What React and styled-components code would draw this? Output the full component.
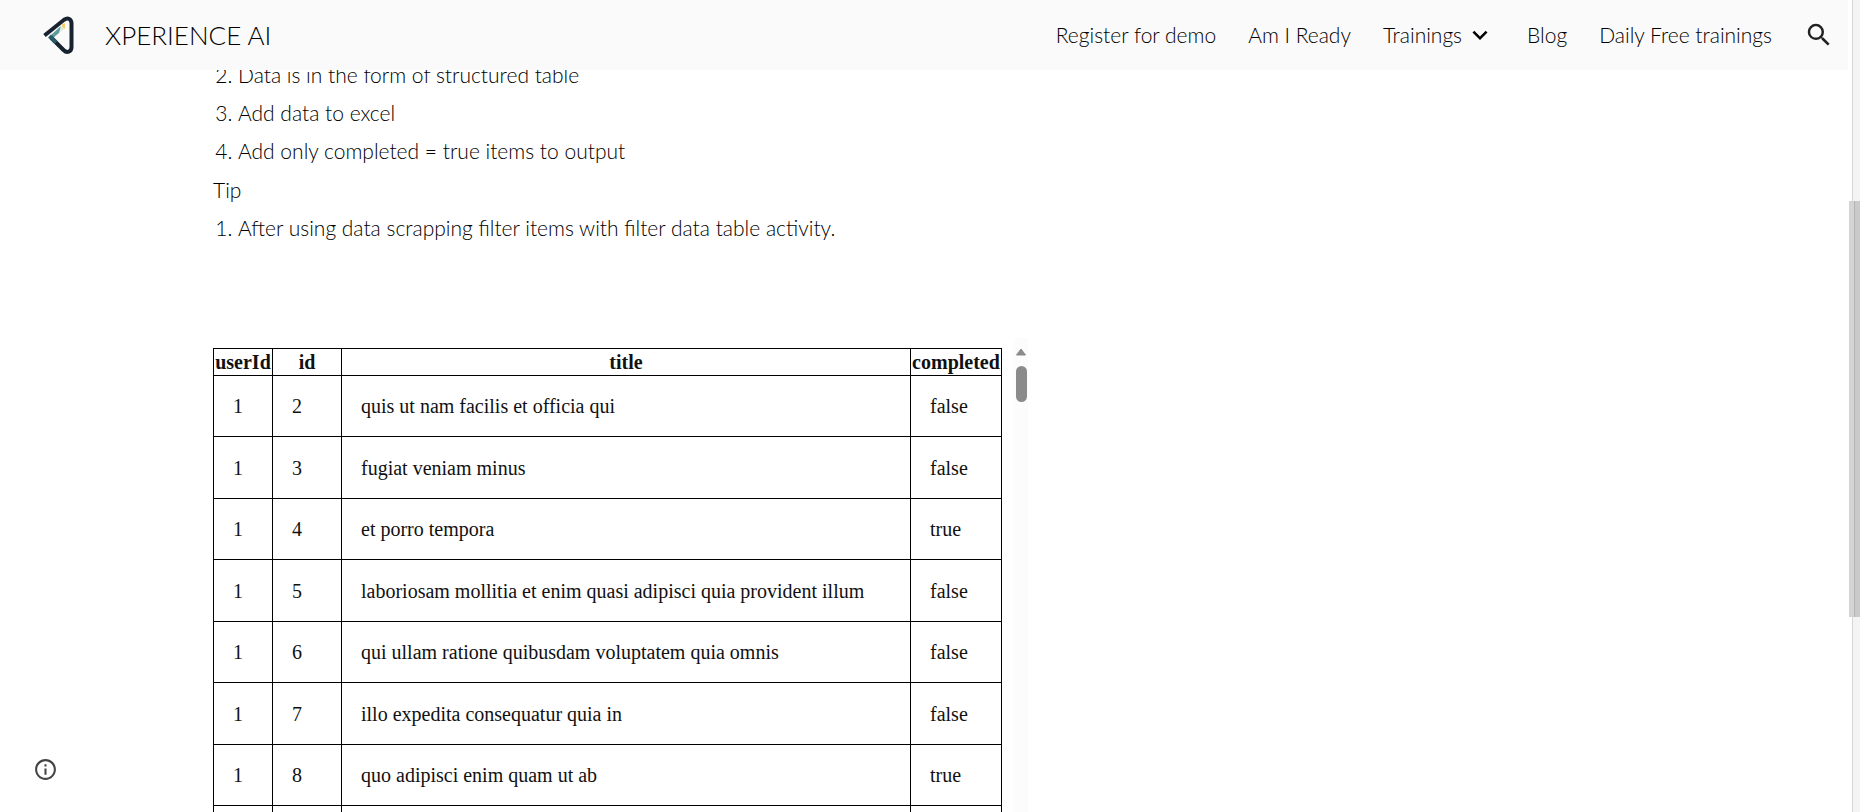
import React from "react";
import styled, { createGlobalStyle } from "styled-components";

const GlobalStyle = createGlobalStyle`
  *, *::before, *::after { box-sizing: border-box; }
  html, body { margin: 0; height: 100%; }
  body {
    background: #fff;
    color: #000;
    font-family: Lato, "Open Sans", sans-serif;
    font-size: 21px;
    font-weight: 300;
    overflow: hidden;
  }
`;

const Page = styled.div`
  display: flex;
  height: 100vh;
  overflow: hidden;
`;

const Viewport = styled.div`
  flex: 1;
  min-width: 0;
  overflow: hidden;
`;

const Header = styled.header`
  position: sticky;
  top: 0;
  z-index: 2;
  display: flex;
  align-items: center;
  justify-content: space-between;
  height: 70px;
  padding: 0 14px 0 40px;
  background: #fafafa;
`;

const Brand = styled.a`
  display: flex;
  align-items: center;
  gap: 28px;
  color: inherit;
  text-decoration: none;
  font-size: 26px;
  line-height: 32px;
  white-space: nowrap;
`;

const Nav = styled.nav`
  display: flex;
  align-items: center;
  gap: 32px;
  white-space: nowrap;
`;

const NavLink = styled.a`
  color: inherit;
  text-decoration: none;
  line-height: 28px;
`;

const MenuButton = styled.button`
  display: flex;
  align-items: center;
  gap: 3px;
  padding: 0;
  border: 0;
  background: none;
  color: inherit;
  font: inherit;
  line-height: 28px;
`;

const IconButton = styled.button`
  display: flex;
  padding: 0;
  border: 0;
  background: none;
  color: ${(p) => p.$color || "#212121"};
`;

const Content = styled.main`
  margin-top: -11px;
  padding-left: 213px;
`;

const Steps = styled.ol`
  margin: 0;
  padding-left: 25px;
  line-height: 32px;
`;

const Step = styled.li`
  margin-bottom: 6px;
`;

const Note = styled.p`
  margin: 0;
  padding: 1px 0 6px;
  line-height: 32px;
`;

const Embed = styled.section`
  display: flex;
  align-items: flex-start;
  gap: 12px;
  margin-top: 94px;
`;

const Table = styled.table`
  margin-top: 10px;
  border-collapse: collapse;
  color: #111;
  font-family: "Liberation Serif", serif;
  font-size: 20px;
  font-weight: 400;
  line-height: 24px;
`;

const HeadCell = styled.th`
  width: ${(p) => p.$width}px;
  height: 27px;
  padding: 1px;
  border: 1px solid #000;
`;

const Row = styled.tr`
  height: 61px;
  &:nth-child(even) { height: 62px; }
`;

const Cell = styled.td`
  padding: 0 0 0 19px;
  border: 1px solid #000;
`;

const EmbedScroll = styled.div`
  display: flex;
  flex-direction: column;
  align-items: center;
  align-self: stretch;
  gap: 10px;
  width: 14px;
  padding-top: 10px;
  background: #fcfcfc;
`;

const EmbedThumb = styled.div`
  width: 11px;
  height: 36px;
  border-radius: 6px;
  background: #8b8b8b;
`;

const PageScroll = styled.div`
  display: flex;
  flex-direction: column;
  align-items: flex-end;
  width: 12px;
  padding-top: 201px;
  background: linear-gradient(to right, #fff 4px, #d6d6d6 4px, #d6d6d6 5px, #f4f4f4 5px);
`;

const PageThumb = styled.div`
  width: 11px;
  height: 416px;
  background: linear-gradient(to right, #d4d4d4 5px, #b2b2b2 5px, #b2b2b2 6px, #cacaca 6px);
`;

const InfoCorner = styled.div`
  position: fixed;
  left: 33px;
  bottom: 30px;
`;

const Icon = ({ size, path }) => (
  <svg width={size} height={size} viewBox="0 0 24 24" fill="currentColor" aria-hidden="true">
    <path d={path} />
  </svg>
);

const Logo = () => (
  <svg width="37" height="40" viewBox="0 0 37 40" fill="none" aria-hidden="true">
    <path d="M11 20 L21 11 L19 18 L13 23Z" fill="#5f9b98" />
    <path d="M22 9.500 L25 8 L25 14 L22 12Z" fill="#f3cf6a" />
    <path d="M21 12 L24 14 L20 17Z" fill="#cfe7dd" />
    <path
      d="M4.500 20.500 L24 4.800 C28 2.200 31.500 4 31.500 8.500 V32 C31.500 37 27 38.500 23.500 35 L11 22.500"
      stroke="#192330"
      strokeWidth="4"
    />
    <path d="M9.500 21 L16 27.500" stroke="#285b65" strokeWidth="4" />
  </svg>
);

const rows = [
  [1, 2, "quis ut nam facilis et officia qui", "false"],
  [1, 3, "fugiat veniam minus", "false"],
  [1, 4, "et porro tempora", "true"],
  [1, 5, "laboriosam mollitia et enim quasi adipisci quia provident illum", "false"],
  [1, 6, "qui ullam ratione quibusdam voluptatem quia omnis", "false"],
  [1, 7, "illo expedita consequatur quia in", "false"],
  [1, 8, "quo adipisci enim quam ut ab", "true"],
  ["", "", "", ""],
];

export default function App() {
  return (
    <Page>
      <GlobalStyle />
      <Viewport>
        <Header>
          <Brand href="#">
            <Logo />
            XPERIENCE AI
          </Brand>
          <Nav>
            <NavLink href="#">Register for demo</NavLink>
            <NavLink href="#">Am I Ready</NavLink>
            <MenuButton type="button">
              Trainings
              <Icon size={30} path="M16.59 8.59 12 13.17 7.41 8.59 6 10l6 6 6-6z" />
            </MenuButton>
            <NavLink href="#">Blog</NavLink>
            <NavLink href="#">Daily Free trainings</NavLink>
            <IconButton type="button" aria-label="Search">
              <Icon
                size={30}
                path="M15.500 14h-.79l-.28-.27A6.471 6.471 0 0 0 16 9.500 6.500 6.500 0 1 0 9.500 16c1.610 0 3.090-.59 4.230-1.570l.27.28v.79l5 4.990L20.490 19l-4.990-5zm-6 0C7.010 14 5 11.990 5 9.500S7.010 5 9.500 5 14 7.010 14 9.500 11.990 14 9.500 14z"
              />
            </IconButton>
          </Nav>
        </Header>
        <Content>
          <Steps start={2}>
            <Step>Data is in the form of structured table</Step>
            <Step>Add data to excel</Step>
            <Step>Add only completed = true items to output</Step>
          </Steps>
          <Note>Tip</Note>
          <Steps>
            <Step>After using data scrapping filter items with filter data table activity.</Step>
          </Steps>
          <Embed>
            <Table>
              <thead>
                <tr>
                  <HeadCell scope="col" $width={59}>userId</HeadCell>
                  <HeadCell scope="col" $width={69}>id</HeadCell>
                  <HeadCell scope="col" $width={569}>title</HeadCell>
                  <HeadCell scope="col" $width={91}>completed</HeadCell>
                </tr>
              </thead>
              <tbody>
                {rows.map((row, index) => (
                  <Row key={index}>
                    {row.map((value, i) => (
                      <Cell key={i}>{value}</Cell>
                    ))}
                  </Row>
                ))}
              </tbody>
            </Table>
            <EmbedScroll aria-hidden="true">
              <svg width="12" height="8" viewBox="0 0 12 8">
                <path d="M6 1 L10.500 7 H1.500Z" fill="#8b8b8b" stroke="#8b8b8b" strokeLinejoin="round" />
              </svg>
              <EmbedThumb />
            </EmbedScroll>
          </Embed>
        </Content>
      </Viewport>
      <PageScroll aria-hidden="true">
        <PageThumb />
      </PageScroll>
      <InfoCorner>
        <IconButton type="button" aria-label="Site information" $color="#444">
          <Icon
            size={25}
            path="M11 7h2v2h-2zm0 4h2v6h-2zm1-9C6.480 2 2 6.480 2 12s4.480 10 10 10 10-4.480 10-10S17.520 2 12 2zm0 18c-4.410 0-8-3.590-8-8s3.590-8 8-8 8 3.590 8 8-3.590 8-8 8z"
          />
        </IconButton>
      </InfoCorner>
    </Page>
  );
}
